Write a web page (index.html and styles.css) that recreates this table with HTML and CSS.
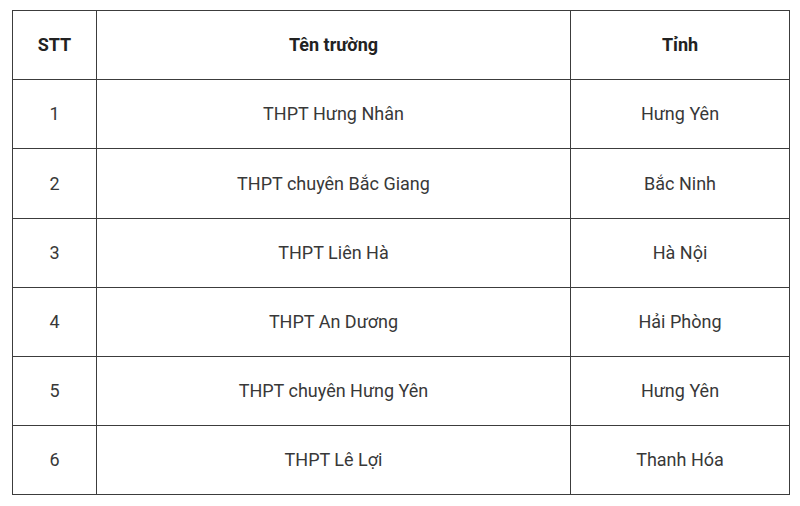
FILE: index.html
```html
<!DOCTYPE html>
<html lang="vi">
<head>
<meta charset="utf-8">
<link rel="stylesheet" href="styles.css">
</head>
<body>
<table class="schools">
  <colgroup>
    <col class="c-stt">
    <col class="c-name">
    <col class="c-prov">
  </colgroup>
  <thead>
    <tr class="r69"><th>STT</th><th>Tên trường</th><th>Tỉnh</th></tr>
  </thead>
  <tbody>
    <tr class="r69"><td>1</td><td>THPT Hưng Nhân</td><td>Hưng Yên</td></tr>
    <tr class="r70"><td>2</td><td>THPT chuyên Bắc Giang</td><td>Bắc Ninh</td></tr>
    <tr class="r69"><td>3</td><td>THPT Liên Hà</td><td>Hà Nội</td></tr>
    <tr class="r69"><td>4</td><td>THPT An Dương</td><td>Hải Phòng</td></tr>
    <tr class="r69"><td>5</td><td>THPT chuyên Hưng Yên</td><td>Hưng Yên</td></tr>
    <tr class="r69"><td>6</td><td>THPT Lê Lợi</td><td>Thanh Hóa</td></tr>
  </tbody>
</table>
</body>
</html>
```
FILE: styles.css
```css
html, body {
  margin: 0;
  padding: 0;
  background: #ffffff;
}
body {
  padding: 10px 0 0 12px;
  font-family: Roboto, "Liberation Sans", Arial, sans-serif;
  font-size: 18px;
  color: #383838;
}
.schools {
  border-collapse: collapse;
  table-layout: fixed;
  width: 777px;
}
.c-stt { width: 84px; }
.c-name { width: 474px; }
.c-prov { width: 219px; }
.schools th,
.schools td {
  border: 1px solid #3c3c3c;
  text-align: center;
  vertical-align: middle;
  padding: 0;
  line-height: 1.2;
}
.schools th {
  font-weight: 700;
  color: #222222;
}
.r69 { height: 69px; }
.r70 { height: 70px; }
```
